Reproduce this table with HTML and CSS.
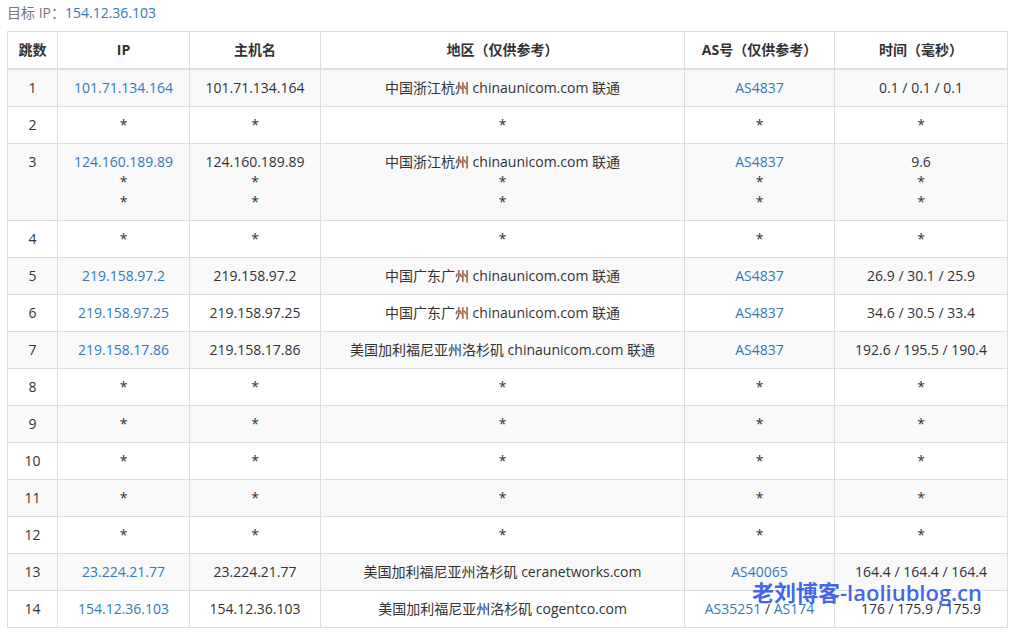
FILE: index.html
```html
<!DOCTYPE html>
<html lang="zh">
<head>
<meta charset="utf-8">
<link rel="stylesheet" href="styles.css">
</head>
<body>
<div class="page">
  <div class="target"><span class="label">目标 IP：</span><a class="link">154.12.36.103</a></div>
  <table class="trace">
    <colgroup>
      <col class="c-hop"><col class="c-ip"><col class="c-host"><col class="c-geo"><col class="c-as"><col class="c-time">
    </colgroup>
    <thead>
      <tr><th>跳数</th><th>IP</th><th>主机名</th><th>地区（仅供参考）</th><th>AS号（仅供参考）</th><th>时间（毫秒）</th></tr>
    </thead>
    <tbody>
      <tr><td>1</td><td><a class="link">101.71.134.164</a></td><td>101.71.134.164</td><td>中国浙江杭州 chinaunicom.com 联通</td><td><a class="link">AS4837</a></td><td>0.1 / 0.1 / 0.1</td></tr>
      <tr><td>2</td><td>*</td><td>*</td><td>*</td><td>*</td><td>*</td></tr>
      <tr class="top"><td>3</td><td><a class="link">124.160.189.89</a><br>*<br>*</td><td>124.160.189.89<br>*<br>*</td><td>中国浙江杭州 chinaunicom.com 联通<br>*<br>*</td><td><a class="link">AS4837</a><br>*<br>*</td><td>9.6<br>*<br>*</td></tr>
      <tr><td>4</td><td>*</td><td>*</td><td>*</td><td>*</td><td>*</td></tr>
      <tr><td>5</td><td><a class="link">219.158.97.2</a></td><td>219.158.97.2</td><td>中国广东广州 chinaunicom.com 联通</td><td><a class="link">AS4837</a></td><td>26.9 / 30.1 / 25.9</td></tr>
      <tr><td>6</td><td><a class="link">219.158.97.25</a></td><td>219.158.97.25</td><td>中国广东广州 chinaunicom.com 联通</td><td><a class="link">AS4837</a></td><td>34.6 / 30.5 / 33.4</td></tr>
      <tr><td>7</td><td><a class="link">219.158.17.86</a></td><td>219.158.17.86</td><td>美国加利福尼亚州洛杉矶 chinaunicom.com 联通</td><td><a class="link">AS4837</a></td><td>192.6 / 195.5 / 190.4</td></tr>
      <tr><td>8</td><td>*</td><td>*</td><td>*</td><td>*</td><td>*</td></tr>
      <tr><td>9</td><td>*</td><td>*</td><td>*</td><td>*</td><td>*</td></tr>
      <tr><td>10</td><td>*</td><td>*</td><td>*</td><td>*</td><td>*</td></tr>
      <tr><td>11</td><td>*</td><td>*</td><td>*</td><td>*</td><td>*</td></tr>
      <tr><td>12</td><td>*</td><td>*</td><td>*</td><td>*</td><td>*</td></tr>
      <tr><td>13</td><td><a class="link">23.224.21.77</a></td><td>23.224.21.77</td><td>美国加利福尼亚州洛杉矶 ceranetworks.com</td><td><a class="link">AS40065</a></td><td>164.4 / 164.4 / 164.4</td></tr>
      <tr><td>14</td><td><a class="link">154.12.36.103</a></td><td>154.12.36.103</td><td>美国加利福尼亚州洛杉矶 cogentco.com</td><td><a class="link">AS35251</a> / <a class="link">AS174</a></td><td>176 / 175.9 / 175.9</td></tr>
    </tbody>
  </table>
  <div class="watermark">老刘博客-laoliublog.cn</div>
</div>
</body>
</html>
```

FILE: styles.css
```css
html, body {
  margin: 0;
  padding: 0;
  background: #ffffff;
}
body {
  font-family: "Open Sans", "Noto Sans CJK SC", sans-serif;
  font-size: 14px;
  color: #333333;
}
.page {
  position: relative;
  padding: 3px 5px 0 7px;
}
.target {
  line-height: 20px;
  height: 20px;
  margin-bottom: 8px;
}
.target .label {
  color: #777777;
}
.link {
  color: #337ab7;
  text-decoration: none;
}
.trace {
  width: 1000px;
  border-collapse: collapse;
  table-layout: fixed;
}
.c-hop { width: 50px; }
.c-ip { width: 132px; }
.c-host { width: 131px; }
.c-geo { width: 364px; }
.c-as { width: 150px; }
.c-time { width: 173px; }
.trace th, .trace td {
  border: 1px solid #dddddd;
  padding: 8px 0;
  line-height: 20px;
  text-align: center;
  vertical-align: middle;
  white-space: nowrap;
}
.trace th {
  font-weight: bold;
  border-bottom: 2px solid #dddddd;
}
.trace tbody tr:nth-child(odd) {
  background: #f9f9f9;
}
.trace tr.top td {
  vertical-align: top;
}
.watermark {
  position: absolute;
  left: 752px;
  top: 578px;
  font-size: 22px;
  font-weight: 600;
  color: #4466ee;
  line-height: 28px;
  white-space: nowrap;
}
```
